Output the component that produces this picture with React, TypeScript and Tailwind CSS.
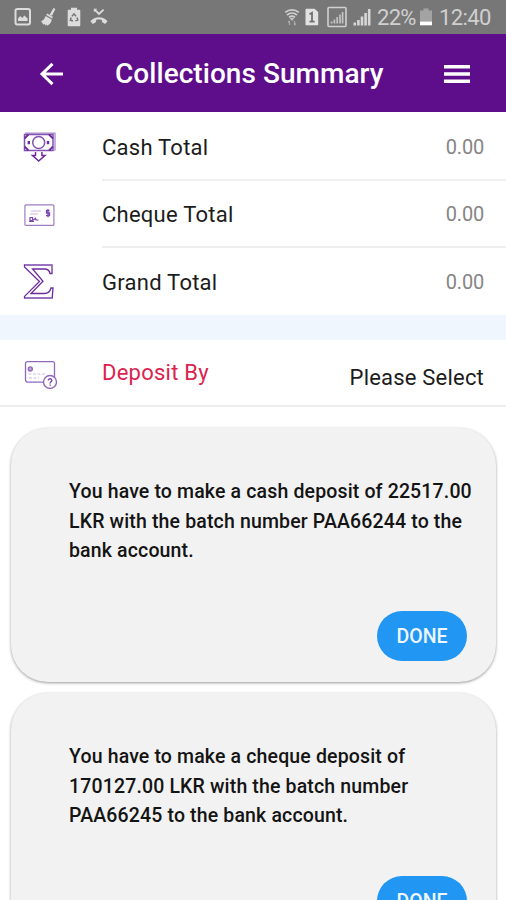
import type { ReactNode } from "react";

/* ---------- Status bar icons ---------- */

function ImageIcon() {
  return (
    <svg width="18" height="20" viewBox="0 0 18 20" fill="none">
      <rect x="1.5" y="2" width="14.500" height="15.500" rx="2" stroke="#dcdcdc" strokeWidth="2" />
      <path d="M4 14V11.500l2.200-2.500 2 2 2.200-2.400L13.600 11.500v2.500z" fill="#dcdcdc" />
    </svg>
  );
}

function BroomIcon() {
  return (
    <svg width="15" height="20" viewBox="0 0 15 20" fill="#dcdcdc">
      <path d="M12.500 1l1.900 1-3.400 6.800-2.400-1z" />
      <path d="M6.200 6.500l5.600 3.200-.6 1.800-6-3.400z" />
      <path d="M4.600 9.100l6.200 3.500c-.4 2.800-2 5-4.400 6.200l-.9-1.200-.9.900-1.100-1.600-1.400.7-.7-1.600L0 14.400c2.200-.7 3.700-2.600 4.600-5.300z" />
    </svg>
  );
}

function BatteryRecycleIcon() {
  return (
    <svg width="14" height="20" viewBox="0 0 14 20" fill="none">
      <path d="M4 .8h6v2h2.500c.5 0 .8.3.8.8v14.800c0 .5-.3.8-.8.8h-11c-.5 0-.8-.3-.8-.8V3.600c0-.5.3-.8.8-.8H4z" fill="#dcdcdc" />
      <path d="M5 9.200L7 6.800l2 2.400M10 10.400l.8 2.700-2.400.8M6 14l-2.600-.7.8-2.800" stroke="#777" strokeWidth="1.500" />
    </svg>
  );
}

function MissedCallIcon() {
  return (
    <svg width="18" height="20" viewBox="0 0 18 20" fill="none">
      <path d="M4.600 2.600L9 7l4.600-4.400" stroke="#dcdcdc" strokeWidth="1.900" />
      <path d="M3.800 1.800h3.400L3.800 5.200z" fill="#dcdcdc" />
      <path d="M.4 14.200C4.800 8.800 13.200 8.800 17.600 14.200l-2.500 2.700-3.200-2v-2c-1.900-.6-3.900-.6-5.800 0v2l-3.200 2z" fill="#dcdcdc" />
    </svg>
  );
}

function WifiIcon() {
  return (
    <svg width="16" height="20" viewBox="0 0 16 20" fill="none" stroke="#cfcfcf">
      <path d="M1.200 5.400c4-3.500 9.600-3.500 13.600 0M3 8c3-2.600 7-2.600 10 0M5 10.400c1.800-1.500 4.200-1.500 6 0" strokeWidth="1.700" />
      <path d="M6 11.200h4L8 13.500z" fill="#cfcfcf" strokeWidth=".5" />
      <path d="M5.500 18v-4M4 15.500l1.500-1.700M10.500 14v4M12 16.500l-1.500 1.700" stroke="#a9a9a9" strokeWidth="1.300" />
    </svg>
  );
}

function SimIcon() {
  return (
    <svg width="14" height="18" viewBox="0 0 14 18" fill="none">
      <path d="M1.500.8h8L13.200 4v12.200c0 .6-.4 1-1 1H1.500c-.6 0-1-.4-1-1V1.800c0-.6.4-1 1-1z" fill="#e2e2e2" />
      <path d="M4.500 6.200L7 4.800v9M4.500 13.700h5.200" stroke="#707070" strokeWidth="1.800" />
    </svg>
  );
}

function BoxedSignalIcon() {
  return (
    <svg width="20" height="22" viewBox="0 0 20 22" fill="none">
      <rect x="1" y="1.500" width="18" height="19" rx="1" stroke="#d0d0d0" strokeWidth="1.600" />
      <path d="M4.600 17.500v-2M7.400 17.500v-4M10.200 17.500v-6.500M13 17.500V8.500M15.600 17.500V6" stroke="#c4c4c4" strokeWidth="1.700" />
    </svg>
  );
}

function SignalIcon() {
  return (
    <svg width="18" height="18" viewBox="0 0 18 18" fill="none" stroke="#d6d6d6" strokeWidth="2.600">
      <path d="M1.800 17.500v-3M5.400 17.500V12M9 17.500V8.500M12.600 17.500V5M16.200 17.500V1" />
    </svg>
  );
}

function BatteryIcon() {
  return (
    <svg width="12" height="18" viewBox="0 0 12 18">
      <path d="M3.500.5h5v2H12V13.500H0V2.500h3.500z" fill="#a3a3a3" />
      <path d="M0 13.500h12V17.300H0z" fill="#fff" />
    </svg>
  );
}

/* ---------- Row icons ---------- */

function CashIcon() {
  return (
    <svg width="34" height="31" viewBox="0 0 34 31" fill="none" stroke="#6b2c9e">
      <path d="M2 1.200h30v17.600" strokeWidth="1.300" stroke="#a98bc9" />
      <rect x="1.500" y="2.500" width="28.500" height="16" strokeWidth="1.500" stroke="#8350b3" />
      <path d="M1.500 6.500l4-4M26 2.500l4 4M1.500 14.500l4 4M26 18.500l4-4" strokeWidth="1.800" />
      <circle cx="15.700" cy="10.500" r="6" strokeWidth="1.500" stroke="#8350b3" />
      <path d="M5.800 9v3.200M25 9v3.200" strokeWidth="2.400" />
      <path d="M12.500 20v3.500H9.500l6.200 5.500 6.200-5.500h-3V20" strokeWidth="1.500" />
    </svg>
  );
}

function ChequeIcon() {
  return (
    <svg width="32" height="24" viewBox="0 0 32 24" fill="none">
      <rect x="1.900" y="1.900" width="29" height="20.500" rx="1" stroke="#a07fc4" strokeWidth="1.200" />
      <path d="M8 8h10M7 11h8" stroke="#ddd0ea" strokeWidth="1.300" />
      <path d="M7 14.500h2.500v3H7zM10 17.200l2.500-2 .5 1.800h2.500M6 18.500h5" stroke="#7a45ad" strokeWidth="1.200" />
      <path d="M26.500 7.500h-3v2.500h3v2.700h-3.500M25 6.200v8" stroke="#7a45ad" strokeWidth="1.300" />
    </svg>
  );
}

function SigmaIcon() {
  return (
    <svg width="32" height="37" viewBox="0 0 32 37" fill="none" stroke="#6b2c9e" strokeWidth="1.300">
      <path d="M1.500 2h27.500v8.500h-2c-.6-3.200-2.500-4.500-5.500-4.500H9.500l10.500 12.300L8 30.500h13.500c4 0 5.500-1.800 6.500-5.500h2l-.8 10H1.500v-1.600l15-14.900L1.500 4z" />
      <path d="M2 35h27M2 2h27" stroke="#9f78c6" strokeWidth="1.600" />
    </svg>
  );
}

function DepositIcon() {
  return (
    <svg width="34" height="30" viewBox="0 0 34 30" fill="none" stroke="#9168bd">
      <rect x="1.500" y="1.600" width="29" height="20.500" rx="2" strokeWidth="1.300" />
      <circle cx="6.300" cy="9" r="1.900" strokeWidth="1.500" />
      <path d="M4 9h5" strokeWidth="1" />
      <path d="M4.500 14h17M5 18h10" strokeWidth="1" strokeDasharray="3 1.500" stroke="#cdbbe0" />
      <circle cx="26" cy="22" r="6.500" fill="#fff" strokeWidth="1.400" />
      <path d="M24.300 20.600c0-2.500 3.600-2.300 3.500 0 0 1.200-1.700 1.300-1.700 2.800M26.100 24.500v1.200" strokeWidth="1.400" stroke="#7a45ad" />
    </svg>
  );
}

/* ---------- Rows ---------- */

interface TotalRowProps {
  icon: ReactNode;
  label: string;
  value: string;
  last?: boolean;
}

function TotalRow({ icon, label, value, last }: TotalRowProps) {
  return (
    <div className="flex h-[67px]">
      <div className="flex w-[102px] shrink-0 items-center pl-[23px]">{icon}</div>
      <div
        className={`flex flex-1 items-center justify-between pr-[22px] pt-[1px] ${
          last ? "" : "border-b-2 border-[#efefef]"
        }`}
      >
        <span className="text-[22px] tracking-[0.25px] text-[#1c1c1c]">{label}</span>
        <span className="text-[20px] tracking-[-0.2px] text-[#858585]">{value}</span>
      </div>
    </div>
  );
}

function DepositCard({ lines }: { lines: string[] }) {
  return (
    <div className="flex h-[254px] shrink-0 flex-col rounded-[37px] bg-[#f2f2f2] pl-[58px] pr-[29px] pt-[49px] shadow-[0_1px_3px_rgba(0,0,0,0.4)]">
      <p className="text-[19.5px] font-medium leading-[29.500px] tracking-[0.15px] text-[#141414]">
        {lines.map((line) => (
          <span key={line} className="block whitespace-nowrap">
            {line}
          </span>
        ))}
      </p>
      <button className="mt-[45.500px] h-[50px] w-[90px] self-end rounded-[25px] bg-[#2196f3] pt-[1px] text-[19.500px] font-medium text-[#eef7ff]">
        DONE
      </button>
    </div>
  );
}

const totals = [
  { label: "Cash Total", value: "0.00", icon: <CashIcon /> },
  { label: "Cheque Total", value: "0.00", icon: <ChequeIcon /> },
  { label: "Grand Total", value: "0.00", icon: <SigmaIcon /> },
];

const deposits = [
  [
    "You have to make a cash deposit of 22517.00",
    "LKR with the batch number PAA66244 to the",
    "bank account.",
  ],
  [
    "You have to make a cheque deposit of",
    "170127.00 LKR with the batch number",
    "PAA66245 to the bank account.",
  ],
];

export default function App() {
  return (
    <div className="flex h-[900px] w-[506px] flex-col overflow-hidden bg-white font-['Roboto',sans-serif]">
      {/* Status bar */}
      <div className="flex h-[34px] shrink-0 items-center justify-between bg-[#777777] pl-[14px] pr-[15px]">
        <div className="flex items-center">
          <ImageIcon />
          <div className="ml-[9px]"><BroomIcon /></div>
          <div className="ml-[11px]"><BatteryRecycleIcon /></div>
          <div className="ml-[9px]"><MissedCallIcon /></div>
        </div>
        <div className="flex items-center text-[22px] text-[#d0d0d0]">
          <WifiIcon />
          <div className="ml-[5px]"><SimIcon /></div>
          <div className="ml-[8px]"><BoxedSignalIcon /></div>
          <div className="ml-[6px]"><SignalIcon /></div>
          <span className="ml-[6px] w-[40px] whitespace-nowrap tracking-[-0.7px]">22%</span>
          <div className="ml-[3px]"><BatteryIcon /></div>
          <span className="ml-[7px] w-[52px] whitespace-nowrap tracking-[-0.6px]">12:40</span>
        </div>
      </div>

      {/* Header */}
      <header className="flex h-[78px] shrink-0 items-center bg-[#5e0d8b] pl-[39px] pr-[36px] pt-[1px] text-white">
        <svg width="25" height="24" viewBox="0 0 25 24" fill="none" stroke="#fff" strokeWidth="3">
          <path d="M24 12H3M13.500 1.800L3 12l10.500 10.200" />
        </svg>
        <h1 className="ml-[51px] whitespace-nowrap text-[28px] font-medium tracking-[0.05px]">Collections Summary</h1>
        <svg className="ml-auto" width="26" height="20" viewBox="0 0 26 20" fill="#fff">
          <path d="M0 1h26v3.500H0zM0 8.300h26v3.500H0zM0 15.500h26V19H0z" />
        </svg>
      </header>

      {/* Totals */}
      <div className="shrink-0 pt-[2px]">
        {totals.map((t, i) => (
          <TotalRow key={t.label} {...t} last={i === totals.length - 1} />
        ))}
      </div>

      <div className="h-[25px] shrink-0 bg-[#eff6fe]" />

      {/* Deposit method */}
      <div className="flex h-[67px] shrink-0 border-b-2 border-[#ededed]">
        <div className="flex w-[102px] shrink-0 items-center pl-[24px] pt-[4px]">
          <DepositIcon />
        </div>
        <div className="flex flex-1 justify-between pr-[22px]">
          <span className="pt-[16px] text-[22px] tracking-[0.25px] text-[#dc2350]">Deposit By</span>
          <span className="pt-[21px] text-[22px] tracking-[0.2px] text-[#1c1c1c]">Please Select</span>
        </div>
      </div>

      {/* Pending deposits */}
      <div className="flex flex-col gap-[11px] pl-[11px] pr-[10px] pt-[21px]">
        {deposits.map((lines) => (
          <DepositCard key={lines[0]} lines={lines} />
        ))}
      </div>
    </div>
  );
}
